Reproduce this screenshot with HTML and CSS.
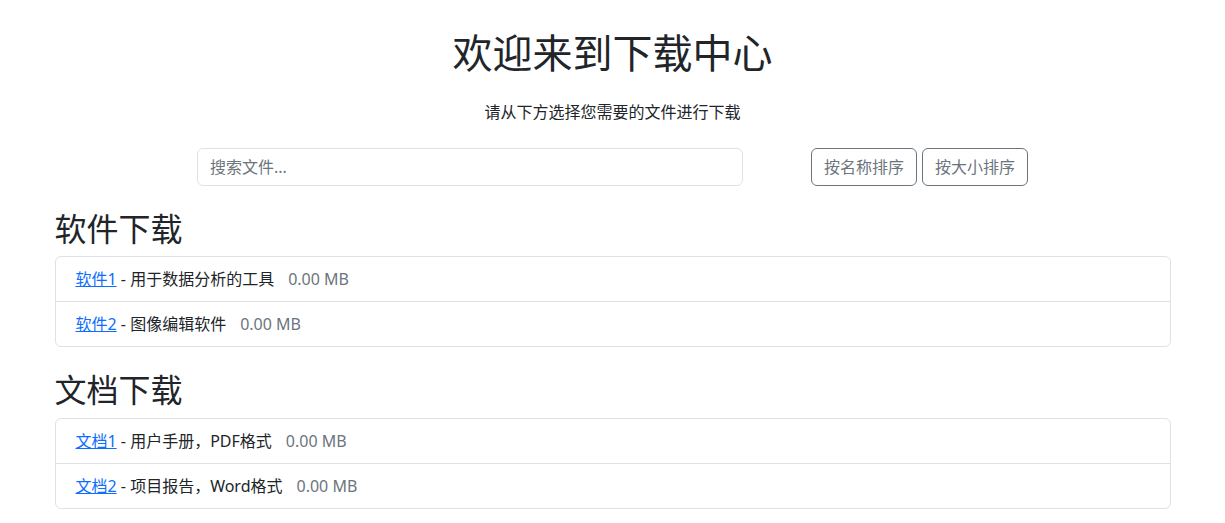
FILE: index.html
```html
<!DOCTYPE html>
<html lang="zh-CN">
<head>
<meta charset="utf-8">
<title>下载中心</title>
<link rel="stylesheet" href="styles.css">
</head>
<body>
<div class="container">
  <header class="header">
    <h1 class="title">欢迎来到下载中心</h1>
    <p class="subtitle">请从下方选择您需要的文件进行下载</p>
  </header>
  <div class="toolbar">
    <div class="search-col">
      <input class="search" type="text" placeholder="搜索文件...">
    </div>
    <div class="sort-col">
      <button class="btn">按名称排序</button>
      <button class="btn">按大小排序</button>
    </div>
  </div>

  <section class="section">
    <h2 class="section-title">软件下载</h2>
    <ul class="list">
      <li class="item"><a href="#">软件1</a> - 用于数据分析的工具<span class="size">0.00 MB</span></li>
      <li class="item"><a href="#">软件2</a> - 图像编辑软件<span class="size">0.00 MB</span></li>
    </ul>
  </section>

  <section class="section">
    <h2 class="section-title">文档下载</h2>
    <ul class="list">
      <li class="item"><a href="#">文档1</a> - 用户手册，PDF格式<span class="size">0.00 MB</span></li>
      <li class="item"><a href="#">文档2</a> - 项目报告，Word格式<span class="size">0.00 MB</span></li>
    </ul>
  </section>
</div>
</body>
</html>
```

FILE: styles.css
```css
* { box-sizing: border-box; }
html, body { margin: 0; padding: 0; background: #fff; }
body {
  font-family: "Noto Sans", "Noto Sans CJK SC", sans-serif;
  font-size: 16px;
  line-height: 1.5;
  color: #212529;
}
.container {
  max-width: 1140px;
  margin: 0 auto;
  padding: 29px 12px 0;
}
.header { text-align: center; }
.title {
  margin: 0 0 23px;
  font-size: 40px;
  font-weight: 400;
  line-height: 1.2;
}
.subtitle {
  margin: 0 0 24px;
  font-size: 16px;
  line-height: 24px;
}
.toolbar {
  display: flex;
  justify-content: center;
  margin: 0 -12px 24px;
}
.search-col {
  flex: 0 0 50%;
  padding: 0 12px;
}
.sort-col {
  flex: 0 0 25%;
  padding: 0 12px;
  display: flex;
  justify-content: flex-end;
  gap: 5px;
}
.search {
  display: block;
  width: 100%;
  height: 38px;
  padding: 6px 12px;
  font: inherit;
  font-size: 16px;
  color: #212529;
  border: 1px solid #dee2e6;
  border-radius: 6px;
  outline: none;
}
.search::placeholder { color: #6c757d; }
.btn {
  height: 38px;
  padding: 6px 12px;
  font: inherit;
  font-size: 16px;
  color: #6c757d;
  background: #fff;
  border: 1px solid #6c757d;
  border-radius: 6px;
}
.section { margin-bottom: 24px; }
.section-title {
  margin: 0 0 8px;
  font-size: 32px;
  font-weight: 400;
  line-height: 1.2;
}
.list {
  list-style: none;
  margin: 0;
  padding: 0;
  border: 1px solid #dee2e6;
  border-radius: 6px;
}
.item {
  padding: 10px 20px;
  line-height: 24px;
  font-size: 16px;
}
.item + .item { border-top: 1px solid #dee2e6; }
.item a { color: #0d6efd; text-decoration: underline; }
.size {
  margin-left: 14px;
  color: #6c757d;
  font-size: 16px;
}
```
